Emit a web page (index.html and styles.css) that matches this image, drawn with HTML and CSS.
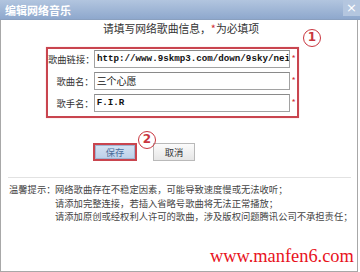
FILE: index.html
```html
<!DOCTYPE html>
<html>
<head>
<meta charset="utf-8">
<link rel="stylesheet" href="styles.css">
</head>
<body>
<div class="dialog">
  <div class="titlebar">
    <span class="title">编辑网络音乐</span>
    <span class="close">×</span>
  </div>
  <div class="body">
    <div class="header">请填写网络歌曲信息，<span class="req">*</span>为必填项</div>
    <div class="form">
      <div class="row">
        <span class="label">歌曲链接：</span>
        <span class="input mono">http://www.9skmp3.com/down/9sky/nei</span>
        <span class="req star">*</span>
      </div>
      <div class="row">
        <span class="label">歌曲名：</span>
        <span class="input">三个心愿</span>
        <span class="req star">*</span>
      </div>
      <div class="row">
        <span class="label">歌手名：</span>
        <span class="input mono">F.I.R</span>
        <span class="req star">*</span>
      </div>
    </div>
    <div class="buttons">
      <span class="btn save">保存</span>
      <span class="btn cancel">取消</span>
    </div>
    <div class="sep"></div>
    <div class="tips">
      <span class="tips-label">温馨提示：</span>
      <div class="tips-lines">
        <div>网络歌曲存在不稳定因素，可能导致速度慢或无法收听；</div>
        <div>请添加完整连接，若插入省略号歌曲将无法正常播放；</div>
        <div>请添加原创或经权利人许可的歌曲，涉及版权问题腾讯公司不承担责任；</div>
      </div>
    </div>
    <span class="mark mark1">1</span>
    <span class="mark mark2">2</span>
    <span class="watermark">www.manfen6.com</span>
  </div>
</div>
</body>
</html>
```
FILE: styles.css
```css
* { box-sizing: border-box; }
html, body { margin: 0; padding: 0; background: #fff; }
body {
  width: 360px;
  height: 272px;
  overflow: hidden;
  font-family: "Noto Sans CJK SC", "Noto Sans", sans-serif;
  color: #333;
}
.dialog { width: 360px; height: 272px; position: relative; }
.titlebar {
  height: 20px;
  width: 360px;
  background: linear-gradient(#b2c5df, #8ea8cd);
  display: flex;
  align-items: center;
  justify-content: space-between;
  border-bottom: 1px solid #8aa0bf;
}
.title {
  color: #fff;
  font-weight: bold;
  font-size: 11px;
  margin-left: 5px;
  line-height: 14px;
}
.close {
  width: 17px;
  height: 16px;
  align-self: flex-start;
  background: #b4c6df;
  color: #fff;
  font-family: "DejaVu Sans", sans-serif;
  font-size: 13px;
  line-height: 15px;
  text-align: center;
}
.body {
  width: 358px;
  height: 252px;
  border-left: 1px solid #a8a8a8;
  border-right: 1px solid #a8a8a8;
  border-bottom: 1px solid #a8a8a8;
  position: relative;
  padding-top: 1px;
}
.header {
  font-size: 10.8px;
  line-height: 14px;
  text-align: center;
  padding-left: 4px;
  color: #333;
}
.req { color: #d0303a; }
.form {
  margin-left: 45px;
  margin-top: 12px;
  width: 253px;
  border: 2px solid #c9454f;
  padding: 1px 0 4px 0;
  display: flex;
  flex-direction: column;
  gap: 4px;
  box-shadow: 0 0 1px #f3b0b5;
}
.row { display: flex; align-items: center; height: 18px; }
.label {
  width: 46px;
  text-align: right;
  font-size: 9.3px;
  white-space: nowrap;
  color: #333;
}
.input {
  width: 198px;
  height: 18px;
  border: 1px solid #a2a2a2;
  border-top-color: #8a8a8a;
  background: #fff;
  font-size: 10px;
  line-height: 16px;
  padding-left: 2px;
  overflow: hidden;
  white-space: nowrap;
  color: #111;
}
.mono {
  font-family: "Liberation Mono", monospace;
  font-size: 9.2px;
  font-weight: bold;
}
.star {
  font-size: 9px;
  width: 7px;
  text-align: center;
  line-height: 10px;
}
.buttons {
  display: flex;
  gap: 16px;
  margin-left: 92px;
  margin-top: 25px;
}
.btn {
  height: 18px;
  font-size: 9.3px;
  line-height: 16px;
  text-align: center;
}
.save {
  width: 44px;
  border: 2px solid #c9454f;
  background: linear-gradient(#d6e3f3, #bcd0ea);
  box-shadow: inset 0 0 0 1px #9fb4d2;
  line-height: 14px;
  color: #4b6e9c;
}
.cancel {
  width: 42px;
  border: 1px solid #b9b9b9;
  background: linear-gradient(#fbfbfb, #e6e6e6);
  color: #333;
}
.sep {
  margin: 16px 6px 0 7px;
  height: 1px;
  background: #e2e2e2;
}
.tips {
  display: flex;
  margin-top: 5px;
  margin-left: 8px;
  font-size: 9.3px;
  line-height: 13.5px;
  color: #444;
}
.tips-label { width: 46px; white-space: nowrap; }
.tips-lines { white-space: nowrap; }
.mark {
  position: absolute;
  width: 18px;
  height: 18px;
  border: 1.5px solid #c9363f;
  border-radius: 50%;
  color: #c9363f;
  font-family: "DejaVu Sans", sans-serif;
  font-weight: bold;
  font-size: 12px;
  line-height: 15px;
  text-align: center;
}
.mark1 { left: 302px; top: 9px; }
.mark2 { left: 137px; top: 111px; }
.watermark {
  position: absolute;
  left: 209px;
  top: 226px;
  font-family: "Liberation Serif", serif;
  font-size: 18.4px;
  line-height: 20px;
  color: #e8121c;
}
```
